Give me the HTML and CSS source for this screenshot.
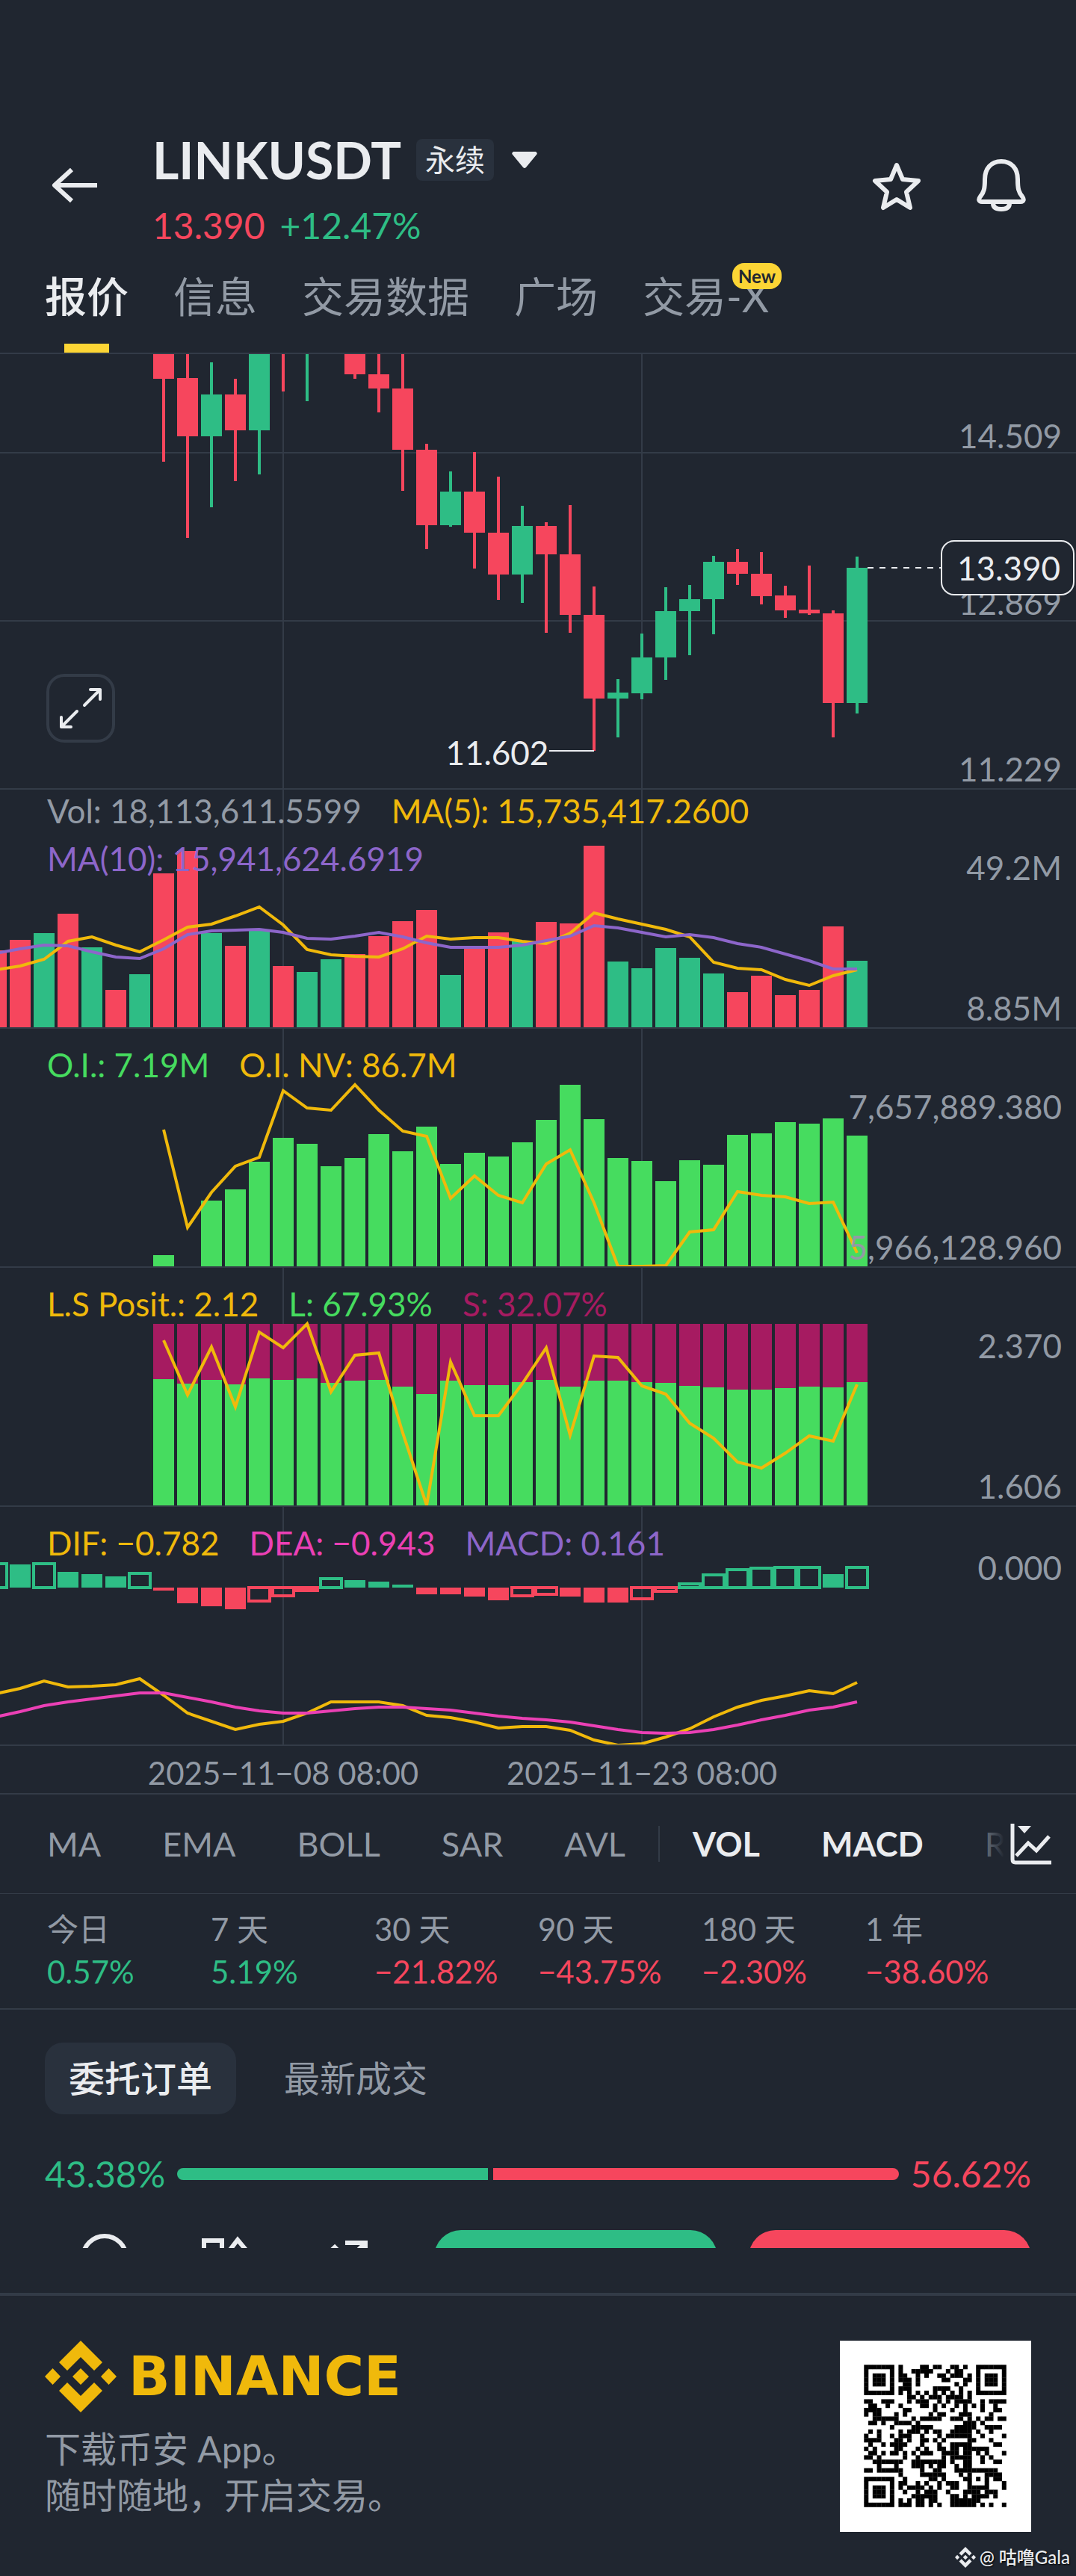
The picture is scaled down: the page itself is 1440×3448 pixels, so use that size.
FILE: index.html
```html
<!DOCTYPE html>
<html lang="zh-CN">
<head>
    <meta charset="UTF-8">
    <meta name="viewport" content="width=device-width, initial-scale=1.0">
    <title>LINKUSDT 永续</title>
    <link rel="stylesheet" href="styles.css">
</head>
<body>
    <header class="header">
        <button class="icon-btn back" aria-label="返回">
            <svg viewBox="0 0 72 72"><path d="M66 36H9M32 15L9 36l23 21" fill="none" stroke="currentColor" stroke-width="6" stroke-linejoin="round"/></svg>
        </button>
        <div class="symbol">
            <div class="symbol-row">
                <h1>LINKUSDT</h1>
                <span class="badge">永续</span>
                <svg class="caret" viewBox="0 0 34 22"><path d="M2 0h30q3 2 1 4L19 21q-2 2-4 0L1 4q-2-2 1-4z" fill="currentColor"/></svg>
            </div>
            <div class="price-row"><span class="red">13.390</span><span class="green">+12.47%</span></div>
        </div>
        <div class="actions">
            <button class="icon-btn" aria-label="收藏">
                <svg viewBox="0 0 72 72"><path d="M36 9l8 19 21 2-16 15 5 21-18-11-18 11 5-21L7 30l21-2z" fill="none" stroke="currentColor" stroke-width="6" stroke-linejoin="round"/></svg>
            </button>
            <button class="icon-btn" aria-label="提醒">
                <svg viewBox="0 0 72 72"><path d="M36 4C22 4 14 14 14 28c0 12-1 17-6 23-3 4-2 7 2 7h52c4 0 5-3 2-7-5-6-6-11-6-23C58 14 50 4 36 4z" fill="none" stroke="currentColor" stroke-width="6"/><path d="M25 60c0 6 5 8 11 8s11-2 11-8" fill="none" stroke="currentColor" stroke-width="6"/></svg>
            </button>
        </div>
    </header>

    <nav class="tabs">
        <a href="#" class="tab active">报价</a>
        <a href="#" class="tab">信息</a>
        <a href="#" class="tab">交易数据</a>
        <a href="#" class="tab">广场</a>
        <a href="#" class="tab">交易-X<span class="new">New</span></a>
    </nav>

    <section class="charts">
        <div class="panel">
            <svg class="plot" id="price" viewBox="0 0 1440 581"></svg>
            <button class="expand" aria-label="全屏">
                <svg viewBox="0 0 84 84"><path d="M47 38L68 17M55 17h13v13M37 46L16 67M29 67H16V54" fill="none" stroke="currentColor" stroke-width="4" stroke-linecap="round" stroke-linejoin="round"/></svg>
            </button>
            <span class="low">11.602</span>
            <div class="axis axis-price"><span>14.509</span><span>12.869</span><span>11.229</span></div>
            <span class="last">13.390</span>
        </div>
        <div class="panel">
            <svg class="plot" id="volume" viewBox="0 0 1440 318"></svg>
            <div class="legend legend-vol">
                <span class="muted">Vol: 18,113,611.5599</span><span class="yellow">MA(5): 15,735,417.2600</span><span class="purple">MA(10): 15,941,624.6919</span>
            </div>
            <div class="axis"><span>49.2M</span><span>8.85M</span></div>
        </div>
        <div class="panel">
            <svg class="plot" id="interest" viewBox="0 0 1440 318"></svg>
            <div class="legend"><span class="lime">O.I.: 7.19M</span><span class="yellow">O.I. NV: 86.7M</span></div>
            <div class="axis"><span>7,657,889.380</span><span>5,966,128.960</span></div>
        </div>
        <div class="panel">
            <svg class="plot" id="position" viewBox="0 0 1440 318"></svg>
            <div class="legend"><span class="yellow">L.S Posit.: 2.12</span><span class="lime">L: 67.93%</span><span class="wine">S: 32.07%</span></div>
            <div class="axis"><span>2.370</span><span>1.606</span></div>
        </div>
        <div class="panel">
            <svg class="plot" id="macd" viewBox="0 0 1440 318"></svg>
            <div class="legend"><span class="yellow">DIF: −0.782</span><span class="pink">DEA: −0.943</span><span class="purple">MACD: 0.161</span></div>
            <div class="axis axis-macd"><span>0.000</span></div>
        </div>
        <div class="dates"><span>2025−11−08 08:00</span><span>2025−11−23 08:00</span></div>
    </section>

    <div class="indicators">
        <div class="indicator-list">
            <button>MA</button>
            <button>EMA</button>
            <button>BOLL</button>
            <button>SAR</button>
            <button>AVL</button>
            <i class="divider"></i>
            <button class="on">VOL</button>
            <button class="on">MACD</button>
            <button>R</button>
        </div>
        <button class="chart-settings" aria-label="指标设置">
            <svg viewBox="0 0 56 56"><path d="M3 1v48q0 4 4 4h48M8 44l16-17 11 10 17-19" fill="none" stroke="currentColor" stroke-width="5"/><path d="M10 4h18l-9 10z" fill="currentColor"/></svg>
        </button>
    </div>

    <dl class="periods">
        <div><dt>今日</dt><dd class="green">0.57%</dd></div>
        <div><dt>7 天</dt><dd class="green">5.19%</dd></div>
        <div><dt>30 天</dt><dd class="red">−21.82%</dd></div>
        <div><dt>90 天</dt><dd class="red">−43.75%</dd></div>
        <div><dt>180 天</dt><dd class="red">−2.30%</dd></div>
        <div><dt>1 年</dt><dd class="red">−38.60%</dd></div>
    </dl>

    <div class="order-tabs">
        <button class="active">委托订单</button>
        <button>最新成交</button>
    </div>
    <div class="ratio">
        <span class="green">43.38%</span>
        <div class="ratio-bar"><i class="buy" style="flex-grow: 43.38"></i><i class="sell" style="flex-grow: 56.62"></i></div>
        <span class="red">56.62%</span>
    </div>
    <div class="trade-bar">
        <div class="shortcuts">
            <button aria-label="更多"><svg viewBox="0 0 64 64"><circle cx="32" cy="37" r="29" fill="none" stroke="currentColor" stroke-width="6"/></svg></button>
            <button aria-label="功能"><svg viewBox="0 0 64 64"><path d="M3 38V14h24v24zM35 30L48 13l14 17-14 17z" fill="none" stroke="currentColor" stroke-width="6"/></svg></button>
            <button aria-label="合约"><svg viewBox="0 0 64 64"><path d="M4 34l12-11 10 10M30 17h27v22M57 17L36 38" fill="none" stroke="currentColor" stroke-width="6"/></svg></button>
        </div>
        <button class="trade buy" aria-label="开多"></button>
        <button class="trade sell" aria-label="开空"></button>
    </div>

    <footer class="footer">
        <div>
            <div class="brand">
                <svg viewBox="0 0 96 96"><use href="#mark"/></svg>
                <strong>BINANCE</strong>
            </div>
            <p>下载币安 App。</p>
            <p>随时随地，开启交易。</p>
        </div>
        <svg class="qr" id="qr" viewBox="-5.6 -5.6 44.4 44.4"></svg>
        <div class="author">
            <svg viewBox="0 0 96 96"><use href="#mark"/></svg>
            <span>@ 咕噜Gala</span>
        </div>
    </footer>

    <svg class="defs">
        <symbol id="mark" viewBox="0 0 96 96">
            <path fill="currentColor" d="M48 0l29 29-11 11-18-18-18 18-11-11zM48 96l29-29-11-11-18 18-18-18-11 11zM0 48l10.500-11L21 48 10.500 59zM37 48l11-11 11 11-11 11zM75 48l10.500-11L96 48 85.500 59z"/>
        </symbol>
    </svg>

    <script>
        const RED = '#f6465d';
        const GREEN = '#2ebd85';
        const LIME = '#46dc5f';
        const WINE = '#a61b61';
        const YELLOW = '#f0b90b';
        const PURPLE = '#8d66ca';
        const PINK = '#eb40b5';
        const GRID = '#333b47';

        // column 0 is the first candle, one column every 32 units
        const xOf = i => 219 + i * 32;

        function add(svg, name, attrs) {
            const node = document.createElementNS('http://www.w3.org/2000/svg', name);
            for (const key in attrs) node.setAttribute(key, attrs[key]);
            svg.appendChild(node);
        }

        function bar(svg, i, top, bottom, fill) {
            add(svg, 'rect', { x: xOf(i) - 14, y: top, width: 28, height: bottom - top, fill });
        }

        function line(svg, start, ys, stroke) {
            const points = ys.map((y, n) => `${xOf(start + n)},${y}`).join(' ');
            add(svg, 'polyline', { points, fill: 'none', stroke, 'stroke-width': 4 });
        }

        function grid(svg, rows, height) {
            rows.forEach(y => add(svg, 'rect', { x: 0, y: y - 1, width: 1440, height: 2, fill: GRID }));
            [379, 859].forEach(x => add(svg, 'rect', { x: x - 1, y: 0, width: 2, height, fill: GRID }));
        }

        // [column, up, wick top, body top, body bottom, wick bottom]
        const candles = [
            [0, 0, 0, 0, 33, 144], [1, 0, 0, 32, 110, 246], [2, 1, 11, 54, 110, 205], [3, 0, 33, 54, 102, 170],
            [4, 1, 0, 0, 102, 161], [5, 0, 0, 0, 0, 50], [6, 1, 0, 0, 0, 63], [8, 0, 0, 0, 27, 33],
            [9, 0, 0, 27, 46, 78], [10, 0, 0, 46, 128, 183], [11, 0, 120, 128, 229, 261], [12, 1, 157, 184, 229, 231],
            [13, 0, 131, 184, 239, 287], [14, 0, 164, 239, 295, 329], [15, 1, 203, 230, 295, 333], [16, 0, 225, 230, 268, 373],
            [17, 0, 202, 268, 349, 373], [18, 0, 311, 349, 461, 531], [19, 1, 435, 453, 461, 513], [20, 1, 374, 406, 454, 462],
            [21, 1, 312, 344, 406, 436], [22, 1, 309, 328, 344, 403], [23, 1, 270, 278, 328, 375], [24, 0, 261, 278, 294, 309],
            [25, 0, 265, 294, 324, 335], [26, 0, 310, 323, 343, 353], [27, 0, 283, 342, 347, 349], [28, 0, 343, 347, 467, 513],
            [29, 1, 271, 286, 467, 481]
        ];
        const price = document.getElementById('price');
        grid(price, [132, 357], 581);
        candles.forEach(([i, up, high, top, bottom, low]) => {
            const fill = up ? GREEN : RED;
            add(price, 'rect', { x: xOf(i) - 2, y: high, width: 4, height: low - high, fill });
            bar(price, i, top, bottom, fill);
        });
        add(price, 'path', { d: 'M1161 286H1262', stroke: '#eaecef', 'stroke-width': 2, 'stroke-dasharray': '8 8' });
        add(price, 'path', { d: 'M735 531H795', stroke: '#eaecef', 'stroke-width': 2 });

        const volumeTops = [215, 201, 192, 166, 211, 268, 247, 112, 82, 192, 209, 189, 236, 244, 227, 220, 196, 176, 161, 248, 212, 191, 203, 177, 179, 75, 230, 239, 212, 225, 246, 271, 249, 275, 268, 183, 229];
        const volumeColors = 'RRGRGRGRRGRGRGGRRRRGRRGRRRGGGGGRRRRRG';
        const volume = document.getElementById('volume');
        grid(volume, [], 318);
        volumeTops.forEach((y, n) => bar(volume, n - 7, y, 318, volumeColors[n] === 'R' ? RED : GREEN));
        line(volume, -7, [241, 236, 227, 203, 197, 208, 217, 201, 184, 180, 169, 157, 181, 214, 221, 223, 224, 213, 196, 200, 198, 198, 203, 206, 192, 165, 173, 180, 187, 197, 231, 239, 241, 254, 262, 249, 241], YELLOW);
        line(volume, -7, [219, 213, 208, 209, 217, 224, 226, 213, 194, 189, 188, 187, 191, 199, 200, 196, 191, 197, 205, 211, 211, 211, 208, 202, 196, 182, 185, 191, 197, 194, 198, 206, 211, 220, 229, 240, 240], PURPLE);

        const interestTops = [303, 318, 230, 215, 178, 146, 154, 184, 173, 141, 164, 131, 181, 166, 171, 152, 122, 75, 121, 173, 177, 204, 176, 182, 142, 140, 125, 127, 120, 143];
        const interest = document.getElementById('interest');
        grid(interest, [], 318);
        interestTops.forEach((y, i) => bar(interest, i, y, 318, LIME));
        line(interest, 0, [135, 266, 219, 184, 172, 83, 106, 109, 75, 109, 137, 144, 227, 197, 223, 233, 181, 162, 233, 318, 318, 317, 272, 269, 218, 223, 225, 234, 232, 300], YELLOW);

        const longTops = [149, 155, 150, 156, 148, 150, 148, 154, 151, 150, 159, 169, 151, 157, 157, 153, 150, 159, 151, 151, 153, 154, 158, 160, 163, 163, 161, 159, 160, 153];
        const position = document.getElementById('position');
        grid(position, [], 318);
        longTops.forEach((y, i) => {
            bar(position, i, 75, y, WINE);
            bar(position, i, y, 318, LIME);
        });
        line(position, 0, [97, 170, 106, 186, 86, 107, 75, 166, 117, 114, 221, 318, 126, 198, 198, 155, 107, 224, 118, 120, 158, 169, 208, 228, 260, 268, 248, 225, 232, 156], YELLOW);

        // [bar end, hollow], zero line at 108
        const histogram = [
            [76, 1], [77, 0], [76, 1], [87, 0], [90, 0], [93, 0], [89, 1], [112, 0], [129, 0], [133, 0], [137, 0], [126, 1], [119, 1],
            [112, 1], [96, 1], [98, 0], [100, 0], [104, 0], [117, 0], [117, 0], [120, 0], [125, 0], [119, 1], [117, 1], [120, 0],
            [128, 0], [128, 0], [123, 1], [113, 1], [103, 1], [91, 1], [84, 1], [82, 1], [81, 1], [81, 1], [90, 0], [81, 1]
        ];
        const macd = document.getElementById('macd');
        grid(macd, [], 318);
        histogram.forEach(([end, hollow], n) => {
            const color = end < 108 ? GREEN : RED;
            const top = Math.min(end, 108);
            const bottom = Math.max(end, 108);
            if (hollow) {
                add(macd, 'rect', { x: xOf(n - 7) - 14, y: top, width: 28, height: bottom - top, fill: 'none', stroke: color, 'stroke-width': 4 });
            } else {
                bar(macd, n - 7, top, bottom, color);
            }
        });
        line(macd, -7, [250, 243, 233, 241, 240, 238, 230, 252, 276, 287, 298, 291, 287, 276, 261, 261, 261, 266, 279, 282, 288, 296, 294, 294, 299, 312, 319, 317, 308, 297, 281, 268, 259, 253, 246, 250, 235], YELLOW);
        line(macd, -7, [281, 274, 266, 261, 257, 253, 249, 249, 255, 261, 268, 273, 276, 276, 273, 270, 268, 268, 270, 272, 276, 280, 283, 285, 288, 293, 298, 302, 303, 302, 298, 292, 285, 279, 272, 268, 261], PINK);

        const modules = [
            '#######.#....##.##..##.#..#######',
            '#.....#.#..#####...#.##...#.....#',
            '#.###.#.##..#.#..##.###.#.#.###.#',
            '#.###.#.###.#.....##...##.#.###.#',
            '#.###.#..##.#........#.#..#.###.#',
            '#.....#.###.....####..#...#.....#',
            '#######.#.#.#.#.#.#.#.#.#.#######',
            '..........##.#.###.####.#........',
            '##..###...#.###..#.#.####..#.####',
            '.##..#..#....##.#.#..#.#.#.#..#..',
            '####.....##.....#...#..#...#..##.',
            '#.##...#.#.....#.##...###....#...',
            '..######...#.#####..###.#.#.##.##',
            '.##.#..####.#..........###.#.....',
            '......#....#####.....#####..####.',
            '.#.#....#.###.#.##..#####.#..#...',
            '#..#..#.###..#...#.######..#....#',
            '####...##.#..##.#.#.....##...#...',
            '.#..#.####...#...#..#####.....##.',
            '#.#....##...#.#..##.##.######....',
            '.##.#.##.#.#.###..####.##.#.#...#',
            '##.#.....#..#.....#.#####..#.#...',
            '..#######..########.#..##..#..##.',
            '...#...#...###.#.##..#.##........',
            '##.######....#..##...##########..',
            '........#....######...#.#...####.',
            '#######..#.....##.#....##.#.#.##.',
            '#.....#.##..#.#..#.###..#...#...#',
            '#.###.#.#.####.#.#..##..#####...#',
            '#.###.#..#..#.###..#...####.###..',
            '#.###.#....######...##.#.####.#..',
            '#.....#.#.#.##.##...#######......',
            '#######.###.##.#.#..######.#.#..#'
        ];
        const qr = document.getElementById('qr');
        modules.forEach((row, y) => [...row].forEach((cell, x) => {
            if (cell === '#') add(qr, 'rect', { x, y, width: 1.04, height: 1.04 });
        }));
    </script>
</body>
</html>
```
FILE: styles.css
```css
* {
    box-sizing: border-box;
}
body {
    margin: 0;
    background: #202630;
    color: #eaecef;
    font-family: Lato, "Noto Sans CJK SC", sans-serif;
    font-size: 42px;
}
h1, p, dl, dd {
    margin: 0;
}
button {
    padding: 0;
    border: none;
    background: none;
    color: inherit;
    font: inherit;
    cursor: pointer;
}
svg {
    display: block;
}
.red { color: #f6465d; }
.green { color: #2ebd85; }
.lime { color: #46dc5f; }
.yellow { color: #f0b90b; }
.purple { color: #8d66ca; }
.pink { color: #eb40b5; }
.wine { color: #a61b61; }
.muted { color: #929aa5; }

/* header */
.header {
    display: flex;
    align-items: flex-start;
    padding: 182px 64px 0;
}
.icon-btn,
.icon-btn svg {
    width: 72px;
    height: 72px;
}
.back {
    margin-top: 30px;
}
.symbol {
    flex: 1;
    margin-left: 68px;
}
.symbol-row {
    display: flex;
    align-items: center;
    height: 64px;
}
h1 {
    font-size: 68px;
    line-height: 64px;
    font-weight: 700;
}
.badge {
    margin-left: 20px;
    padding: 0 12px;
    border-radius: 8px;
    background: #29313d;
    font-size: 40px;
    line-height: 56px;
}
.caret {
    width: 34px;
    height: 22px;
    margin-left: 24px;
}
.price-row {
    display: flex;
    gap: 20px;
    margin-top: 36px;
    font-size: 48px;
    line-height: 40px;
}
.actions {
    display: flex;
    gap: 68px;
    margin-top: 30px;
}

/* tabs */
.tabs {
    display: flex;
    gap: 60px;
    padding: 35px 60px 0;
    border-bottom: 2px solid #333b47;
}
.tab {
    position: relative;
    padding-bottom: 35px;
    color: #929aa5;
    font-size: 56px;
    line-height: 80px;
    text-decoration: none;
}
.tab.active {
    color: #eaecef;
    font-weight: 500;
}
.tab.active::after {
    content: "";
    position: absolute;
    left: 50%;
    bottom: 0;
    width: 60px;
    height: 12px;
    margin-left: -30px;
    background: #fcd535;
}
.new {
    position: absolute;
    left: 120px;
    top: -5px;
    padding: 0 8px;
    border-radius: 16px;
    background: #fcd535;
    color: #202630;
    font-size: 24px;
    font-weight: 700;
    line-height: 35px;
}

/* charts */
.panel {
    position: relative;
    border-bottom: 2px solid #333b47;
    font-size: 44px;
}
.plot {
    width: 100%;
    height: auto;
}
.legend {
    position: absolute;
    left: 63px;
    top: 16px;
    display: flex;
    flex-wrap: wrap;
    column-gap: 40px;
    line-height: 64px;
}
.legend-vol {
    top: -4px;
    width: 1100px;
}
.axis {
    position: absolute;
    top: 0;
    right: 19px;
    bottom: 0;
    display: flex;
    flex-direction: column;
    justify-content: space-between;
    padding: 80px 0 2px;
    color: #929aa5;
    line-height: 48px;
    text-align: right;
}
.axis-price {
    padding-top: 85px;
}
.axis-macd {
    padding-top: 57px;
}
.last {
    position: absolute;
    right: 2px;
    top: 249px;
    padding: 0 17px 0 20px;
    border: 2px solid #eaecef;
    border-radius: 18px;
    background: #202630;
    line-height: 70px;
}
.low {
    position: absolute;
    right: 49%;
    bottom: 24px;
    line-height: 48px;
}
.expand {
    position: absolute;
    left: 62px;
    bottom: 61px;
    width: 92px;
    height: 92px;
    border: 4px solid #333b47;
    border-radius: 24px;
}
.dates {
    display: flex;
    padding: 12px 0 3px 9.650%;
    border-bottom: 2px solid #333b47;
    color: #929aa5;
    line-height: 48px;
}
.dates span {
    width: 36.900%;
    text-align: center;
}

/* indicators */
.indicators {
    position: relative;
    padding-left: 63px;
    border-bottom: 1px solid #333b47;
}
.indicator-list {
    display: flex;
    align-items: center;
    gap: 82px;
    height: 132px;
    overflow: hidden;
    color: #929aa5;
    font-size: 45px;
}
.indicator-list .on {
    color: #eaecef;
    font-weight: 700;
}
.divider {
    width: 2px;
    height: 48px;
    margin: 0 -38px;
    background: #333b47;
}
.chart-settings {
    position: absolute;
    top: 0;
    right: 0;
    height: 132px;
    padding: 0 32px 0 48px;
    background: linear-gradient(90deg, transparent, #202630 40px);
}
.chart-settings svg {
    width: 56px;
    height: 56px;
}

/* periods */
.periods {
    display: grid;
    grid-template-columns: repeat(6, 1fr);
    padding: 19px 63px 20px;
    border-bottom: 2px solid #333b47;
    line-height: 57px;
}
.periods dt {
    color: #929aa5;
}

/* orders */
.order-tabs {
    display: flex;
    gap: 32px;
    padding: 44px 60px;
}
.order-tabs button {
    padding: 0 32px;
    border-radius: 24px;
    color: #929aa5;
    font-size: 48px;
    line-height: 96px;
}
.order-tabs .active {
    background: #29313d;
    color: #eaecef;
    font-weight: 500;
}
.ratio {
    display: flex;
    align-items: center;
    gap: 16px;
    padding: 4px 60px 43px;
    font-size: 48px;
    line-height: 64px;
}
.ratio-bar {
    flex: 1;
    display: flex;
    gap: 7px;
    height: 16px;
    border-radius: 8px;
    overflow: hidden;
}
.ratio-bar i {
    flex-basis: 0;
}
.buy {
    background: #2ebd85;
}
.sell {
    background: #f6465d;
}
.trade-bar {
    display: flex;
    gap: 42px;
    height: 24px;
    padding: 0 60px;
    overflow: hidden;
}
.shortcuts {
    flex: 431;
    display: flex;
    gap: 98px;
    padding-left: 48px;
}
.shortcuts svg {
    width: 64px;
    height: 64px;
}
.trade {
    flex: 378;
    height: 128px;
    border-radius: 36px;
}

/* footer */
.footer {
    position: relative;
    display: flex;
    justify-content: space-between;
    margin-top: 60px;
    padding: 60px;
    border-top: 4px solid #333b47;
}
.footer p {
    color: #929aa5;
    font-size: 48px;
    line-height: 62px;
}
.brand {
    display: flex;
    align-items: center;
    gap: 16px;
    margin-bottom: 18px;
    color: #f0b90b;
}
.brand svg {
    width: 96px;
    height: 96px;
}
.brand strong {
    font-family: "DejaVu Sans", sans-serif;
    font-size: 73px;
    line-height: 96px;
}
.qr {
    width: 256px;
    height: 256px;
    background: #fff;
}
.author {
    position: absolute;
    right: 8px;
    bottom: 10px;
    display: flex;
    align-items: center;
    gap: 5px;
    font-size: 24px;
    font-weight: 500;
    line-height: 32px;
    text-shadow: 1px 1px 2px #000;
}
.author svg {
    width: 28px;
    height: 28px;
}
.defs {
    position: absolute;
    width: 0;
    height: 0;
}
```
